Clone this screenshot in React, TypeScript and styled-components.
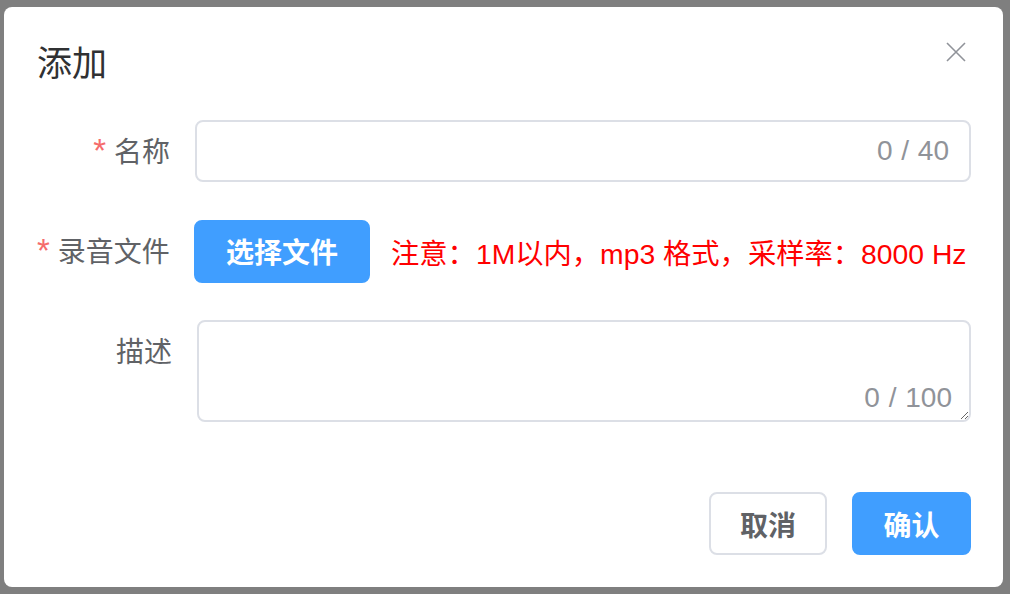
import React from "react";
import styled, { createGlobalStyle } from "styled-components";

const Global = createGlobalStyle`
  html, body { margin: 0; padding: 0; }
  body {
    background: #7f7f7f;
    font-family: "Liberation Sans", "Noto Sans CJK SC", sans-serif;
    width: 1010px;
    height: 594px;
    overflow: hidden;
  }
  * { box-sizing: border-box; }
`;

const Page = styled.div`
  width: 1010px;
  height: 594px;
  padding: 7px 7px 7px 4px;
`;

const Dialog = styled.div`
  width: 999px;
  height: 580px;
  background: #ffffff;
  border-radius: 8px;
  display: flex;
  flex-direction: column;
`;

const Header = styled.div`
  display: flex;
  justify-content: space-between;
  align-items: flex-start;
  padding: 28px 37px 0 33px;
`;

const Title = styled.div`
  font-size: 35px;
  line-height: 48px;
  color: #303133;
  margin-top: 5px;
`;

const CloseButton = styled.button`
  width: 20px;
  height: 20px;
  margin-top: 7px;
  padding: 0;
  border: none;
  background: transparent;
  display: flex;
  cursor: pointer;
`;

const Form = styled.div`
  display: flex;
  flex-direction: column;
  padding: 32px 32px 0 33px;
  gap: 37.5px;
`;

const Row = styled.div<{ $top?: boolean }>`
  display: flex;
  align-items: ${(p) => (p.$top ? "flex-start" : "center")};
`;

const Label = styled.label<{ $width: number }>`
  width: ${(p) => p.$width}px;
  height: 62px;
  flex-shrink: 0;
  text-align: right;
  padding-right: 25px;
  font-size: 28px;
  line-height: 66px;
  color: #606266;
  white-space: nowrap;
`;

const Star = styled.span`
  color: #f56c6c;
  font-size: 33px;
  line-height: 0;
  margin-right: 8px;
`;

const InputWrap = styled.div`
  flex: 1;
  height: 62px;
  border: 2px solid #dcdfe6;
  border-radius: 8px;
  display: flex;
  align-items: center;
  padding: 0 20px 0 28px;
`;

const Input = styled.input`
  flex: 1;
  border: none;
  outline: none;
  font: inherit;
  font-size: 28px;
  color: #606266;
  background: transparent;
  min-width: 0;
`;

const Count = styled.span`
  font-size: 28px;
  color: #909399;
  white-space: nowrap;
  word-spacing: 1px;
`;

const AreaWrap = styled.div`
  flex: 1;
  position: relative;
  height: 102px;
`;

const TextArea = styled.textarea`
  width: 100%;
  height: 102px;
  border: 2px solid #dcdfe6;
  border-radius: 8px;
  resize: vertical;
  outline: none;
  font: inherit;
  font-size: 28px;
  padding: 8px 28px;
  color: #606266;
  display: block;
`;

const AreaCount = styled(Count)`
  position: absolute;
  right: 19px;
  bottom: 10px;
  line-height: 28px;
  background: #fff;
`;

const Button = styled.button<{ $primary?: boolean; $width: number }>`
  width: ${(p) => p.$width}px;
  height: 63px;
  border-radius: 8px;
  border: 2px solid ${(p) => (p.$primary ? "#409eff" : "#dcdfe6")};
  background: ${(p) => (p.$primary ? "#409eff" : "#ffffff")};
  color: ${(p) => (p.$primary ? "#ffffff" : "#606266")};
  font-family: "Liberation Sans", "Noto Sans CJK SC", sans-serif;
  font-size: 28px;
  font-weight: 700;
  padding: 0;
  display: flex;
  align-items: center;
  justify-content: center;
  cursor: pointer;
  flex-shrink: 0;
`;

const Note = styled.span`
  margin-left: 21px;
  font-size: 28.3px;
  color: #ff0000;
  white-space: nowrap;
`;

const Footer = styled.div`
  margin-top: auto;
  display: flex;
  justify-content: flex-end;
  gap: 25px;
  padding: 0 32px 32px 0;
`;

export default function App() {
  return (
    <>
      <Global />
      <Page>
        <Dialog>
          <Header>
            <Title>添加</Title>
            <CloseButton aria-label="关闭">
              <svg width="20" height="20" viewBox="0 0 20 20">
                <path d="M1 1 L19 19 M19 1 L1 19" stroke="#909399" strokeWidth="1.6" fill="none" />
              </svg>
            </CloseButton>
          </Header>
          <Form>
            <Row>
              <Label $width={158}>
                <Star>*</Star>名称
              </Label>
              <InputWrap>
                <Input />
                <Count>0 / 40</Count>
              </InputWrap>
            </Row>
            <Row>
              <Label $width={157}>
                <Star>*</Star>录音文件
              </Label>
              <Button $primary $width={176}>选择文件</Button>
              <Note>注意：1M以内，mp3 格式，采样率：8000 Hz</Note>
            </Row>
            <Row $top>
              <Label $width={160}>描述</Label>
              <AreaWrap>
                <TextArea />
                <AreaCount>0 / 100</AreaCount>
              </AreaWrap>
            </Row>
          </Form>
          <Footer>
            <Button $width={118}>取消</Button>
            <Button $primary $width={119}>确认</Button>
          </Footer>
        </Dialog>
      </Page>
    </>
  );
}
